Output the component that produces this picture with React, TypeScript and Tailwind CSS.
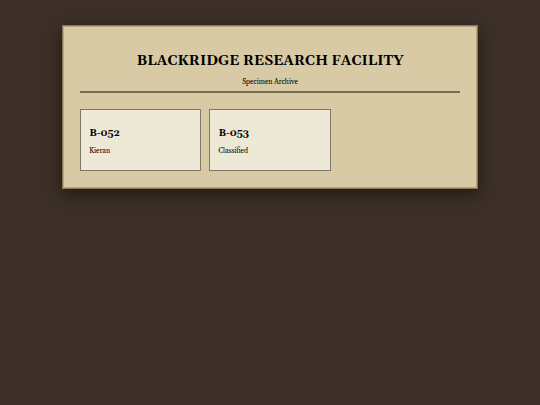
interface Specimen {
  id: string
  name: string
}

const specimens: Specimen[] = [
  { id: 'B-052', name: 'Kieran' },
  { id: 'B-053', name: 'Classified' },
]

function SpecimenCard({ specimen }: { specimen: Specimen }) {
  return (
    <article className="border border-[#7d7966] bg-[#eee9d6] px-2 py-4">
      <h2 className="text-[10px] leading-[14px] font-bold">{specimen.id}</h2>
      <p className="mt-2 text-[7px] leading-[6px]">{specimen.name}</p>
    </article>
  )
}

export default function App() {
  return (
    <div className="min-h-screen bg-[#3d3028] px-4 py-[25px] font-[Georgia,Gelasio,'Liberation_Serif',serif] text-black">
      <main className="mx-auto w-9/11 border border-[#8b7653] bg-[#d8caa5] p-[17px] shadow-[inset_0_0_0_1px_#b7a581,0_5px_16px_rgba(0,0,0,0.5)]">
        <header className="border-b-2 border-[#786c50] pt-[10px] pb-[5px] text-center">
          <h1 className="text-[14px] leading-4 font-bold">BLACKRIDGE RESEARCH FACILITY</h1>
          <p className="mt-[9px] text-[7px] leading-2">Specimen Archive</p>
        </header>
        <section className="mt-4 grid grid-cols-3 gap-2">
          {specimens.map((specimen) => (
            <SpecimenCard key={specimen.id} specimen={specimen} />
          ))}
        </section>
      </main>
    </div>
  )
}
